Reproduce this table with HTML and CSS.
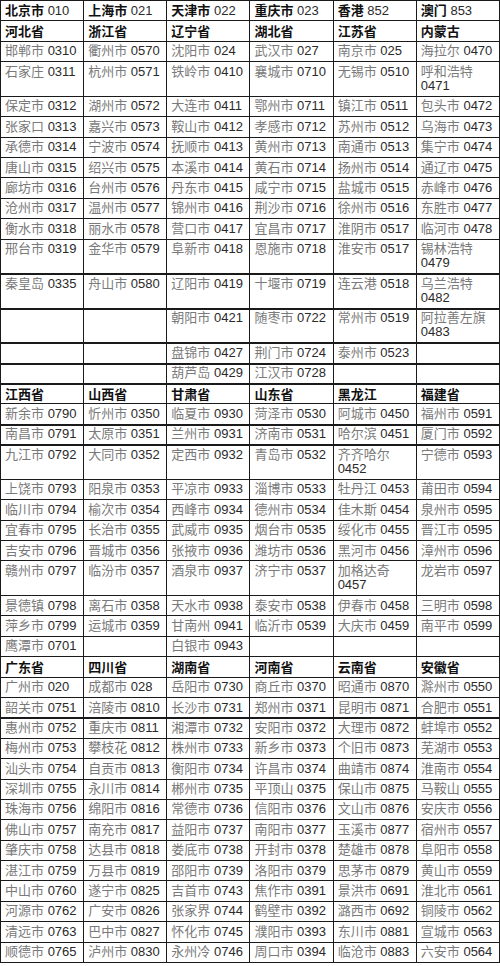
FILE: index.html
```html
<!DOCTYPE html>
<html lang="zh-CN">
<head>
<meta charset="utf-8">
<title>全国主要城市电话区号</title>
<link rel="stylesheet" href="styles.css">
</head>
<body>
<table class="codes">
<colgroup><col><col><col><col><col><col></colgroup>
<tbody>
<tr class="top"><td><b>北京市</b> 010</td><td><b>上海市</b> 021</td><td><b>天津市</b> 022</td><td><b>重庆市</b> 023</td><td><b>香港</b> 852</td><td><b>澳门</b> 853</td></tr>
<tr><th>河北省</th><th>浙江省</th><th>辽宁省</th><th>湖北省</th><th>江苏省</th><th>内蒙古</th></tr>
<tr><td><span class="ct">邯郸市</span> 0310</td><td><span class="ct">衢州市</span> 0570</td><td><span class="ct">沈阳市</span> 024</td><td><span class="ct">武汉市</span> 027</td><td><span class="ct">南京市</span> 025</td><td><span class="ct">海拉尔</span> 0470</td></tr>
<tr><td><span class="ct">石家庄</span> 0311</td><td><span class="ct">杭州市</span> 0571</td><td><span class="ct">铁岭市</span> 0410</td><td><span class="ct">襄城市</span> 0710</td><td><span class="ct">无锡市</span> 0510</td><td><span class="ct">呼和浩特</span> 0471</td></tr>
<tr><td><span class="ct">保定市</span> 0312</td><td><span class="ct">湖州市</span> 0572</td><td><span class="ct">大连市</span> 0411</td><td><span class="ct">鄂州市</span> 0711</td><td><span class="ct">镇江市</span> 0511</td><td><span class="ct">包头市</span> 0472</td></tr>
<tr><td><span class="ct">张家口</span> 0313</td><td><span class="ct">嘉兴市</span> 0573</td><td><span class="ct">鞍山市</span> 0412</td><td><span class="ct">孝感市</span> 0712</td><td><span class="ct">苏州市</span> 0512</td><td><span class="ct">乌海市</span> 0473</td></tr>
<tr><td><span class="ct">承德市</span> 0314</td><td><span class="ct">宁波市</span> 0574</td><td><span class="ct">抚顺市</span> 0413</td><td><span class="ct">黄州市</span> 0713</td><td><span class="ct">南通市</span> 0513</td><td><span class="ct">集宁市</span> 0474</td></tr>
<tr><td><span class="ct">唐山市</span> 0315</td><td><span class="ct">绍兴市</span> 0575</td><td><span class="ct">本溪市</span> 0414</td><td><span class="ct">黄石市</span> 0714</td><td><span class="ct">扬州市</span> 0514</td><td><span class="ct">通辽市</span> 0475</td></tr>
<tr><td><span class="ct">廊坊市</span> 0316</td><td><span class="ct">台州市</span> 0576</td><td><span class="ct">丹东市</span> 0415</td><td><span class="ct">咸宁市</span> 0715</td><td><span class="ct">盐城市</span> 0515</td><td><span class="ct">赤峰市</span> 0476</td></tr>
<tr><td><span class="ct">沧州市</span> 0317</td><td><span class="ct">温州市</span> 0577</td><td><span class="ct">锦州市</span> 0416</td><td><span class="ct">荆沙市</span> 0716</td><td><span class="ct">徐州市</span> 0516</td><td><span class="ct">东胜市</span> 0477</td></tr>
<tr><td><span class="ct">衡水市</span> 0318</td><td><span class="ct">丽水市</span> 0578</td><td><span class="ct">营口市</span> 0417</td><td><span class="ct">宜昌市</span> 0717</td><td><span class="ct">淮阴市</span> 0517</td><td><span class="ct">临河市</span> 0478</td></tr>
<tr><td><span class="ct">邢台市</span> 0319</td><td><span class="ct">金华市</span> 0579</td><td><span class="ct">阜新市</span> 0418</td><td><span class="ct">恩施市</span> 0718</td><td><span class="ct">淮安市</span> 0517</td><td><span class="ct">锡林浩特</span> 0479</td></tr>
<tr class="tk"><td><span class="ct">秦皇岛</span> 0335</td><td><span class="ct">舟山市</span> 0580</td><td><span class="ct">辽阳市</span> 0419</td><td><span class="ct">十堰市</span> 0719</td><td><span class="ct">连云港</span> 0518</td><td><span class="ct">乌兰浩特</span> 0482</td></tr>
<tr class="tk"><td></td><td></td><td><span class="ct">朝阳市</span> 0421</td><td><span class="ct">随枣市</span> 0722</td><td><span class="ct">常州市</span> 0519</td><td><span class="ct">阿拉善左旗</span> 0483</td></tr>
<tr class="tk"><td></td><td></td><td><span class="ct">盘锦市</span> 0427</td><td><span class="ct">荆门市</span> 0724</td><td><span class="ct">泰州市</span> 0523</td><td></td></tr>
<tr class="tk"><td></td><td></td><td><span class="ct">葫芦岛</span> 0429</td><td><span class="ct">江汉市</span> 0728</td><td></td><td></td></tr>
<tr class="tk"><th>江西省</th><th>山西省</th><th>甘肃省</th><th>山东省</th><th>黑龙江</th><th>福建省</th></tr>
<tr><td><span class="ct">新余市</span> 0790</td><td><span class="ct">忻州市</span> 0350</td><td><span class="ct">临夏市</span> 0930</td><td><span class="ct">菏泽市</span> 0530</td><td><span class="ct">阿城市</span> 0450</td><td><span class="ct">福州市</span> 0591</td></tr>
<tr class="tk"><td><span class="ct">南昌市</span> 0791</td><td><span class="ct">太原市</span> 0351</td><td><span class="ct">兰州市</span> 0931</td><td><span class="ct">济南市</span> 0531</td><td><span class="ct">哈尔滨</span> 0451</td><td><span class="ct">厦门市</span> 0592</td></tr>
<tr class="tk"><td><span class="ct">九江市</span> 0792</td><td><span class="ct">大同市</span> 0352</td><td><span class="ct">定西市</span> 0932</td><td><span class="ct">青岛市</span> 0532</td><td><span class="ct">齐齐哈尔</span> 0452</td><td><span class="ct">宁德市</span> 0593</td></tr>
<tr><td><span class="ct">上饶市</span> 0793</td><td><span class="ct">阳泉市</span> 0353</td><td><span class="ct">平凉市</span> 0933</td><td><span class="ct">淄博市</span> 0533</td><td><span class="ct">牡丹江</span> 0453</td><td><span class="ct">莆田市</span> 0594</td></tr>
<tr><td><span class="ct">临川市</span> 0794</td><td><span class="ct">榆次市</span> 0354</td><td><span class="ct">西峰市</span> 0934</td><td><span class="ct">德州市</span> 0534</td><td><span class="ct">佳木斯</span> 0454</td><td><span class="ct">泉州市</span> 0595</td></tr>
<tr><td><span class="ct">宜春市</span> 0795</td><td><span class="ct">长治市</span> 0355</td><td><span class="ct">武威市</span> 0935</td><td><span class="ct">烟台市</span> 0535</td><td><span class="ct">绥化市</span> 0455</td><td><span class="ct">晋江市</span> 0595</td></tr>
<tr><td><span class="ct">吉安市</span> 0796</td><td><span class="ct">晋城市</span> 0356</td><td><span class="ct">张掖市</span> 0936</td><td><span class="ct">潍坊市</span> 0536</td><td><span class="ct">黑河市</span> 0456</td><td><span class="ct">漳州市</span> 0596</td></tr>
<tr><td><span class="ct">赣州市</span> 0797</td><td><span class="ct">临汾市</span> 0357</td><td><span class="ct">酒泉市</span> 0937</td><td><span class="ct">济宁市</span> 0537</td><td><span class="ct">加格达奇</span> 0457</td><td><span class="ct">龙岩市</span> 0597</td></tr>
<tr><td><span class="ct">景德镇</span> 0798</td><td><span class="ct">离石市</span> 0358</td><td><span class="ct">天水市</span> 0938</td><td><span class="ct">泰安市</span> 0538</td><td><span class="ct">伊春市</span> 0458</td><td><span class="ct">三明市</span> 0598</td></tr>
<tr><td><span class="ct">萍乡市</span> 0799</td><td><span class="ct">运城市</span> 0359</td><td><span class="ct">甘南州</span> 0941</td><td><span class="ct">临沂市</span> 0539</td><td><span class="ct">大庆市</span> 0459</td><td><span class="ct">南平市</span> 0599</td></tr>
<tr><td><span class="ct">鹰潭市</span> 0701</td><td></td><td><span class="ct">白银市</span> 0943</td><td></td><td></td><td></td></tr>
<tr><th>广东省</th><th>四川省</th><th>湖南省</th><th>河南省</th><th>云南省</th><th>安徽省</th></tr>
<tr><td><span class="ct">广州市</span> 020</td><td><span class="ct">成都市</span> 028</td><td><span class="ct">岳阳市</span> 0730</td><td><span class="ct">商丘市</span> 0370</td><td><span class="ct">昭通市</span> 0870</td><td><span class="ct">滁州市</span> 0550</td></tr>
<tr><td><span class="ct">韶关市</span> 0751</td><td><span class="ct">涪陵市</span> 0810</td><td><span class="ct">长沙市</span> 0731</td><td><span class="ct">郑州市</span> 0371</td><td><span class="ct">昆明市</span> 0871</td><td><span class="ct">合肥市</span> 0551</td></tr>
<tr class="tk"><td><span class="ct">惠州市</span> 0752</td><td><span class="ct">重庆市</span> 0811</td><td><span class="ct">湘潭市</span> 0732</td><td><span class="ct">安阳市</span> 0372</td><td><span class="ct">大理市</span> 0872</td><td><span class="ct">蚌埠市</span> 0552</td></tr>
<tr><td><span class="ct">梅州市</span> 0753</td><td><span class="ct">攀枝花</span> 0812</td><td><span class="ct">株州市</span> 0733</td><td><span class="ct">新乡市</span> 0373</td><td><span class="ct">个旧市</span> 0873</td><td><span class="ct">芜湖市</span> 0553</td></tr>
<tr><td><span class="ct">汕头市</span> 0754</td><td><span class="ct">自贡市</span> 0813</td><td><span class="ct">衡阳市</span> 0734</td><td><span class="ct">许昌市</span> 0374</td><td><span class="ct">曲靖市</span> 0874</td><td><span class="ct">淮南市</span> 0554</td></tr>
<tr><td><span class="ct">深圳市</span> 0755</td><td><span class="ct">永川市</span> 0814</td><td><span class="ct">郴州市</span> 0735</td><td><span class="ct">平顶山</span> 0375</td><td><span class="ct">保山市</span> 0875</td><td><span class="ct">马鞍山</span> 0555</td></tr>
<tr><td><span class="ct">珠海市</span> 0756</td><td><span class="ct">绵阳市</span> 0816</td><td><span class="ct">常德市</span> 0736</td><td><span class="ct">信阳市</span> 0376</td><td><span class="ct">文山市</span> 0876</td><td><span class="ct">安庆市</span> 0556</td></tr>
<tr><td><span class="ct">佛山市</span> 0757</td><td><span class="ct">南充市</span> 0817</td><td><span class="ct">益阳市</span> 0737</td><td><span class="ct">南阳市</span> 0377</td><td><span class="ct">玉溪市</span> 0877</td><td><span class="ct">宿州市</span> 0557</td></tr>
<tr><td><span class="ct">肇庆市</span> 0758</td><td><span class="ct">达县市</span> 0818</td><td><span class="ct">娄底市</span> 0738</td><td><span class="ct">开封市</span> 0378</td><td><span class="ct">楚雄市</span> 0878</td><td><span class="ct">阜阳市</span> 0558</td></tr>
<tr><td><span class="ct">湛江市</span> 0759</td><td><span class="ct">万县市</span> 0819</td><td><span class="ct">邵阳市</span> 0739</td><td><span class="ct">洛阳市</span> 0379</td><td><span class="ct">思茅市</span> 0879</td><td><span class="ct">黄山市</span> 0559</td></tr>
<tr><td><span class="ct">中山市</span> 0760</td><td><span class="ct">遂宁市</span> 0825</td><td><span class="ct">吉首市</span> 0743</td><td><span class="ct">焦作市</span> 0391</td><td><span class="ct">景洪市</span> 0691</td><td><span class="ct">淮北市</span> 0561</td></tr>
<tr><td><span class="ct">河源市</span> 0762</td><td><span class="ct">广安市</span> 0826</td><td><span class="ct">张家界</span> 0744</td><td><span class="ct">鹤壁市</span> 0392</td><td><span class="ct">潞西市</span> 0692</td><td><span class="ct">铜陵市</span> 0562</td></tr>
<tr><td><span class="ct">清远市</span> 0763</td><td><span class="ct">巴中市</span> 0827</td><td><span class="ct">怀化市</span> 0745</td><td><span class="ct">濮阳市</span> 0393</td><td><span class="ct">东川市</span> 0881</td><td><span class="ct">宣城市</span> 0563</td></tr>
<tr><td><span class="ct">顺德市</span> 0765</td><td><span class="ct">泸州市</span> 0830</td><td><span class="ct">永州冷</span> 0746</td><td><span class="ct">周口市</span> 0394</td><td><span class="ct">临沧市</span> 0883</td><td><span class="ct">六安市</span> 0564</td></tr>
</tbody>
</table>
</body>
</html>
```
FILE: styles.css
```css
html, body {
  margin: 0;
  padding: 0;
  background: #ffffff;
}

.codes {
  width: 500px;
  table-layout: fixed;
  border-collapse: collapse;
  font-family: "Liberation Sans", "Noto Sans CJK SC", sans-serif;
  font-size: 13px;
  line-height: 14.2px;
  color: #2a2a2a;
}

.codes td,
.codes th {
  border: 1px solid #1a1a1a;
  padding: 2.6px 3px 2.6px 4px;
  text-align: left;
  vertical-align: top;
  font-weight: normal;
}

.codes th {
  font-family: "Noto Sans CJK SC", sans-serif;
  font-weight: bold;
  color: #111111;
}

.codes b {
  font-family: "Noto Sans CJK SC", sans-serif;
  font-weight: bold;
  color: #111111;
  line-height: 12px;
}

.codes .ct {
  font-family: "Noto Sans CJK SC", sans-serif;
  color: #7a7a7a;
  line-height: 12px;
}

.codes .tk td,
.codes .tk th {
  box-shadow: inset 0 1px 0 #1a1a1a;
}
```
